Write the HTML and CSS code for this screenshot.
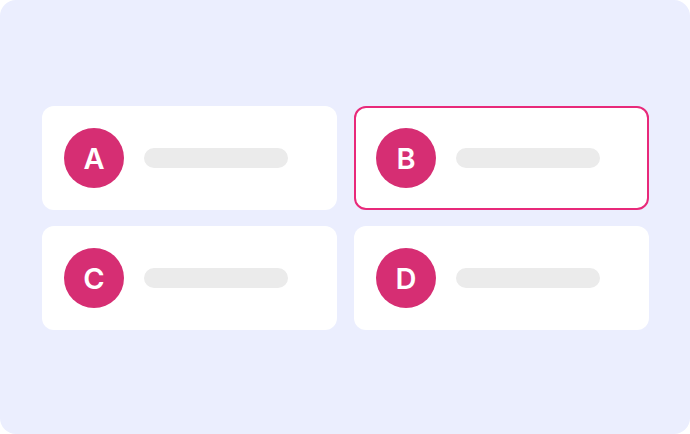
FILE: index.html
```html
<!DOCTYPE html>
<html>
<head>
<meta charset="utf-8">
<link rel="stylesheet" href="styles.css">
</head>
<body>
<div class="frame">
  <div class="grid">
    <div class="card"><div class="avatar">A</div><div class="bar"></div></div>
    <div class="card selected"><div class="avatar">B</div><div class="bar"></div></div>
    <div class="card"><div class="avatar">C</div><div class="bar"></div></div>
    <div class="card"><div class="avatar">D</div><div class="bar"></div></div>
  </div>
</div>
</body>
</html>
```

FILE: styles.css
```css
html, body {
  margin: 0;
  padding: 0;
  background: #ffffff;
}
.frame {
  width: 690px;
  height: 434px;
  box-sizing: border-box;
  background: #ebeefe;
  border-radius: 16px;
  padding: 106px 41px 0 42px;
}
.grid {
  display: grid;
  grid-template-columns: 295px 295px;
  grid-auto-rows: 104px;
  column-gap: 17px;
  row-gap: 16px;
}
.card {
  background: #ffffff;
  border-radius: 12px;
  display: flex;
  align-items: center;
  padding-left: 22px;
  gap: 20px;
  box-sizing: border-box;
}
.card.selected {
  border: 2px solid #e8297a;
  padding-left: 20px;
}
.avatar {
  width: 60px;
  height: 60px;
  border-radius: 50%;
  background: #d62e73;
  color: #ffffff;
  font-family: Inter, "Liberation Sans", sans-serif;
  font-weight: 600;
  font-size: 29px;
  line-height: 1;
  display: flex;
  align-items: center;
  justify-content: center;
  flex-shrink: 0;
}
.bar {
  width: 144px;
  height: 20px;
  border-radius: 10px;
  background: #ebebeb;
}
```
